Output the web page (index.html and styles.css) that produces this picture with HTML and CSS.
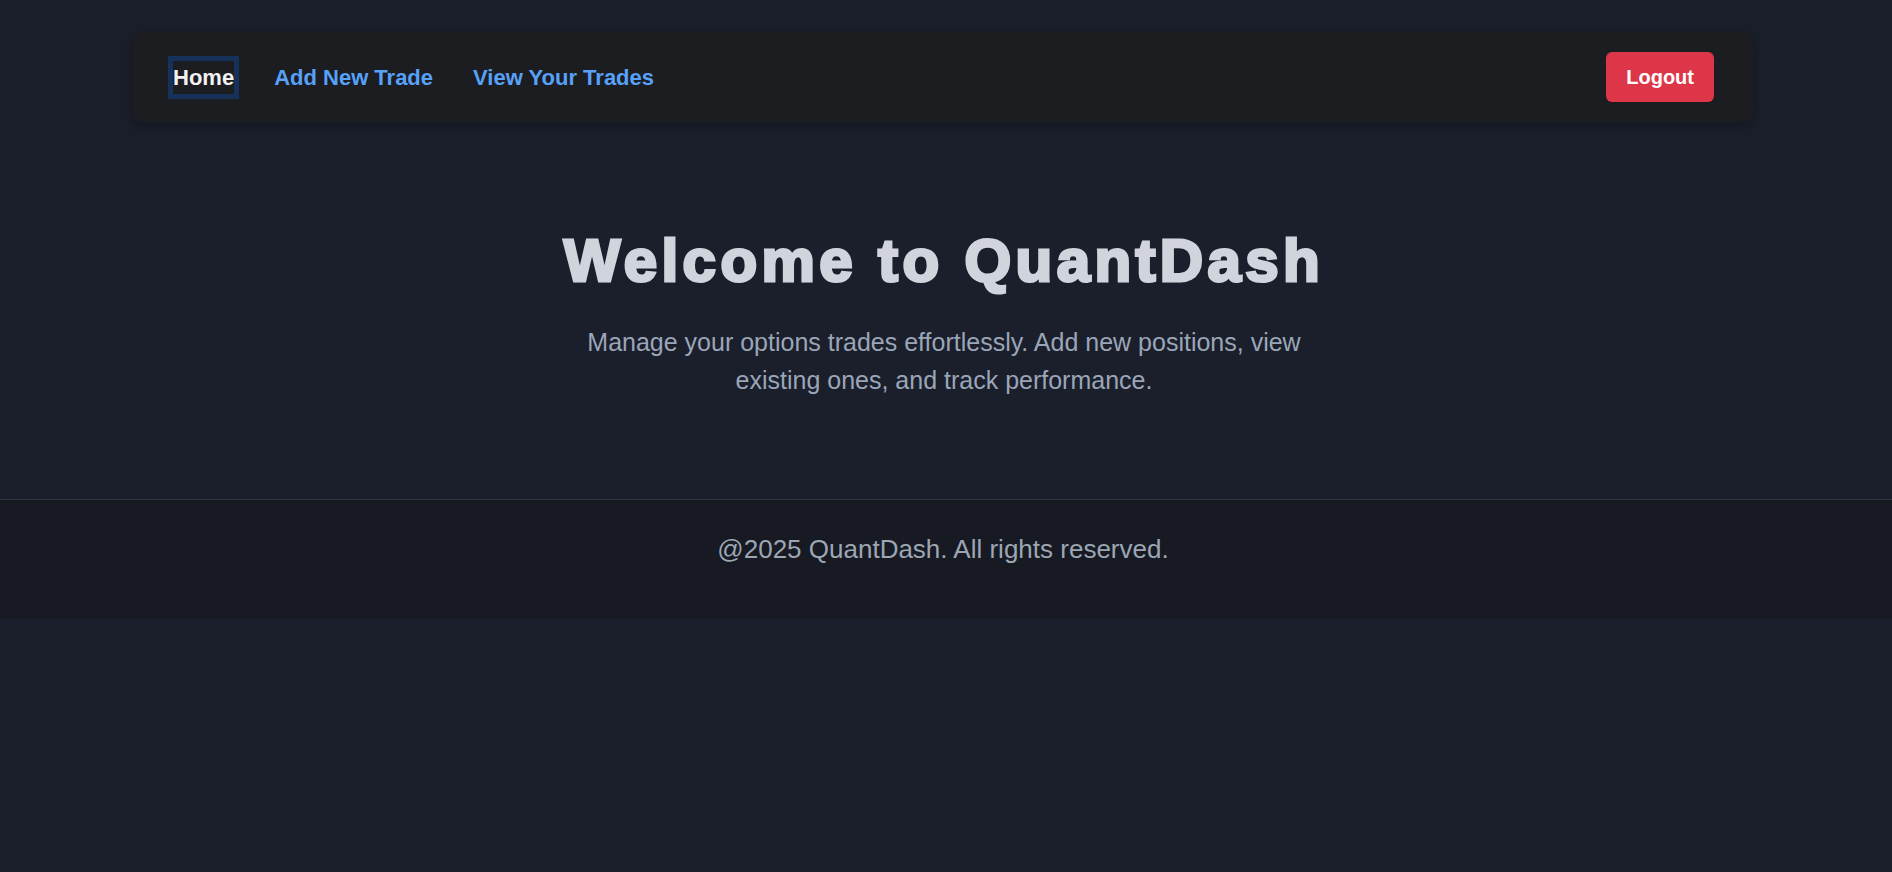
FILE: index.html
```html
<!DOCTYPE html>
<html lang="en">
<head>
<meta charset="utf-8">
<title>QuantDash</title>
<link rel="stylesheet" href="styles.css">
</head>
<body>
  <header class="header">
    <nav class="navbar">
      <div class="nav-links">
        <a class="nav-link active" href="#">Home</a>
        <a class="nav-link" href="#">Add New Trade</a>
        <a class="nav-link" href="#">View Your Trades</a>
      </div>
      <button class="logout" type="button">Logout</button>
    </nav>
  </header>
  <main class="hero">
    <h1 class="hero-title">Welcome to QuantDash</h1>
    <p class="hero-text">Manage your options trades effortlessly. Add new positions, view existing ones, and track performance.</p>
  </main>
  <footer class="footer">
    <p class="footer-text">@2025 QuantDash. All rights reserved.</p>
  </footer>
</body>
</html>
```

FILE: styles.css
```css
* {
  box-sizing: border-box;
}

html, body {
  margin: 0;
  padding: 0;
}

body {
  background: #1b1f2b;
  font-family: "Liberation Sans", Arial, sans-serif;
  min-height: 872px;
}

.header {
  padding: 32px 6px 0 0;
}

.navbar {
  max-width: 1620px;
  height: 90px;
  margin: 0 auto;
  padding: 0 39px 0 40px;
  background: #1c1d21;
  border-radius: 9px;
  box-shadow: 0 4px 14px rgba(0, 0, 0, 0.28);
  display: flex;
  align-items: center;
  justify-content: space-between;
}

.nav-links {
  display: flex;
  align-items: center;
  gap: 40px;
}

.nav-link {
  font-size: 22px;
  font-weight: 700;
  line-height: 25px;
  padding: 4px 0;
  color: #58a1f8;
  text-decoration: none;
}

.nav-link.active {
  color: #f2f2f2;
  outline: 5px solid #17325a;
}

.logout {
  font-family: "Liberation Sans", Arial, sans-serif;
  font-size: 20px;
  font-weight: 700;
  line-height: 24px;
  padding: 13px 20px;
  color: #ffffff;
  background: #dd3648;
  border: none;
  border-radius: 6px;
}

.hero {
  padding: 103px 4px 100px 0;
  text-align: center;
}

.hero-title {
  margin: 0;
  font-size: 60px;
  line-height: 72px;
  font-weight: 700;
  letter-spacing: 4.4px;
  color: #d1d4dc;
  -webkit-text-stroke: 3px #d1d4dc;
}

.hero-text {
  max-width: 760px;
  margin: 27px auto 0;
  font-size: 25px;
  line-height: 1.5;
  color: #9aa6b8;
}

.footer {
  border-top: 1px solid #30343e;
  background: #171a22;
  padding: 34px 6px 55px 0;
  text-align: center;
}

.footer-text {
  margin: 0;
  font-size: 26px;
  line-height: 30px;
  color: #9ca6b4;
}
```
